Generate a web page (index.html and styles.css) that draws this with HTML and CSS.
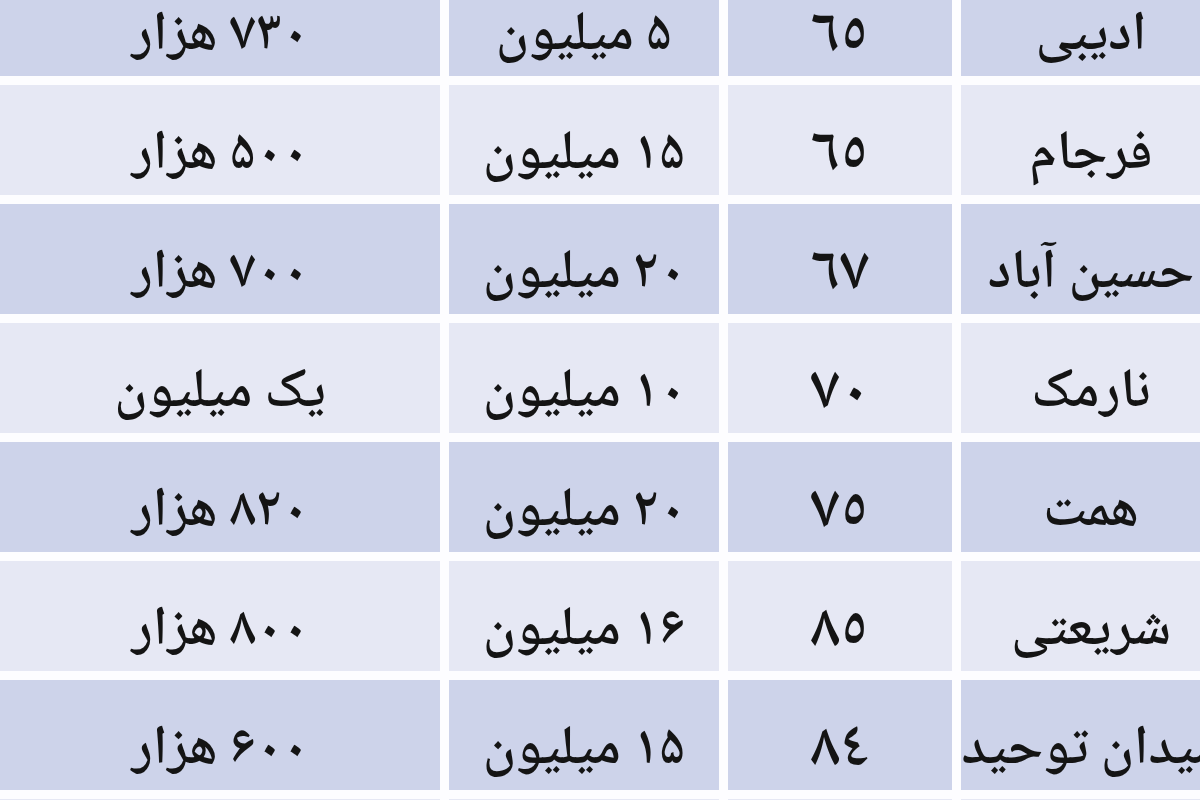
FILE: index.html
```html
<!DOCTYPE html>
<html lang="fa">
<head><meta charset="utf-8"><title>قیمت اجاره</title><link rel="stylesheet" href="styles.css"></head>
<body>
<div class="table" dir="rtl">
  <div class="cell dark first name">ادیبی</div><div class="cell dark first num">٦٥</div><div class="cell dark first">۵ میلیون</div><div class="cell dark first wide">۷۳۰ هزار</div>
  <div class="cell light name">فرجام</div><div class="cell light num">٦٥</div><div class="cell light">۱۵ میلیون</div><div class="cell light wide">۵۰۰ هزار</div>
  <div class="cell dark name">حسین آباد</div><div class="cell dark num">٦٧</div><div class="cell dark">۲۰ میلیون</div><div class="cell dark wide">۷۰۰ هزار</div>
  <div class="cell light name">نارمک</div><div class="cell light num">٧٠</div><div class="cell light">۱۰ میلیون</div><div class="cell light wide">یک میلیون</div>
  <div class="cell dark name">همت</div><div class="cell dark num">٧٥</div><div class="cell dark">۲۰ میلیون</div><div class="cell dark wide">۸۲۰ هزار</div>
  <div class="cell light name">شریعتی</div><div class="cell light num">٨٥</div><div class="cell light">۱۶ میلیون</div><div class="cell light wide">۸۰۰ هزار</div>
  <div class="cell dark name">میدان توحید</div><div class="cell dark num">٨٤</div><div class="cell dark">۱۵ میلیون</div><div class="cell dark wide">۶۰۰ هزار</div>
  <div class="cell light name"></div><div class="cell light num"></div><div class="cell light"></div><div class="cell light wide"></div>
</div>
</body>
</html>
```
FILE: styles.css
```css
html, body {
  margin: 0;
  padding: 0;
  background: #fdfdff;
  overflow: hidden;
}
.table {
  display: grid;
  grid-template-columns: 260px 224px 270px 440px;
  grid-template-rows: 76px;
  grid-auto-rows: 110px;
  gap: 9px;
  width: 1221px;
  font-family: "Noto Naskh Arabic", "DejaVu Sans", serif;
  font-size: 55px;
  font-weight: 600;
  color: #141414;
}
.cell {
  display: flex;
  align-items: center;
  justify-content: center;
  line-height: 1.3;
  padding-top: 34px;
  box-sizing: border-box;
  white-space: nowrap;
}
.first { padding-top: 0; }
.num { font-size: 62px; }
.dark { background: #cdd3ea; }
.light { background: #e6e8f4; }
```
